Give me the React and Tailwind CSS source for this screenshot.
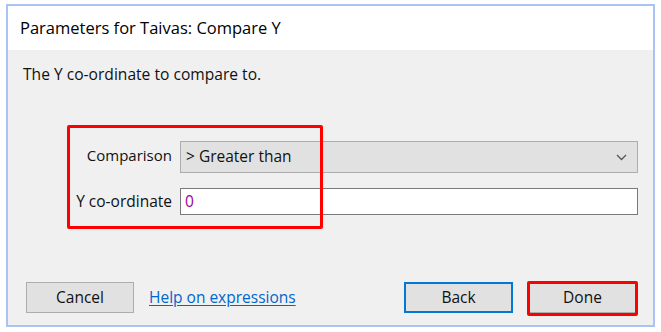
export default function App() {
  const font = { fontFamily: '"Open Sans", "Noto Sans", Arial, sans-serif' };
  return (
    <div className="relative w-[661px] h-[332px] bg-white pt-[4px] pl-[6px]" style={font}>
      <div className="w-[649px] h-[323px] border-2 border-[#a9c3f2] flex flex-col bg-[#f0f0f0]">
        <div className="h-[44px] bg-white flex items-center pl-[12px] text-[16.5px] text-black">
          Parameters for Taivas: Compare Y
        </div>
        <div className="flex-1 flex flex-col">
          <div className="pl-[15px] pt-[14px] text-[15.6px] leading-[20px] text-[#111]">
            The Y co-ordinate to compare to.
          </div>
          <div className="mt-[57px] grid grid-cols-[164px_1fr] gap-x-[8px] gap-y-[15px] pr-[15px] text-[15.5px] text-[#111]">
            <div className="flex items-center justify-end h-[32px] text-[15px] pb-[3px]">Comparison</div>
            <div className="h-[32px] bg-[#e1e1e1] border border-[#adadad] flex items-center justify-between pl-[5px] pr-[10px]">
              <span>&gt; Greater than</span>
              <svg width="11" height="7" viewBox="0 0 11 7">
                <path d="M1 1 L5.5 5.5 L10 1" fill="none" stroke="#555" strokeWidth="1.3" />
              </svg>
            </div>
            <div className="flex items-center justify-end h-[27px]">Y co-ordinate</div>
            <div className="h-[27px] bg-white border border-[#7a7a7a] flex items-center pl-[4px] text-[#a000a0]">0</div>
          </div>
          <div className="mt-auto pb-[12px] flex items-center pl-[18px] pr-[16px] text-[15.5px] text-[#111]">
            <div className="w-[108px] h-[31px] bg-[#e1e1e1] border border-[#adadad] flex items-center justify-center">Cancel</div>
            <span className="ml-[15px] text-[#0066cc] underline underline-offset-2">Help on expressions</span>
            <div className="ml-auto w-[109px] h-[31px] bg-[#e1e1e1] border-2 border-[#0078d7] flex items-center justify-center">Back</div>
            <div className="ml-[15px] w-[109px] h-[31px] bg-[#e1e1e1] border border-[#adadad] flex items-center justify-center">Done</div>
          </div>
        </div>
      </div>
      <div className="absolute left-[67px] top-[125px] w-[256px] h-[104px] border-[3px] border-[#ff0000] rounded-[2px]" />
      <div className="absolute left-[527px] top-[281px] w-[111px] h-[35px] border-[3px] border-[#ff0000] rounded-[2px]" />
    </div>
  );
}
